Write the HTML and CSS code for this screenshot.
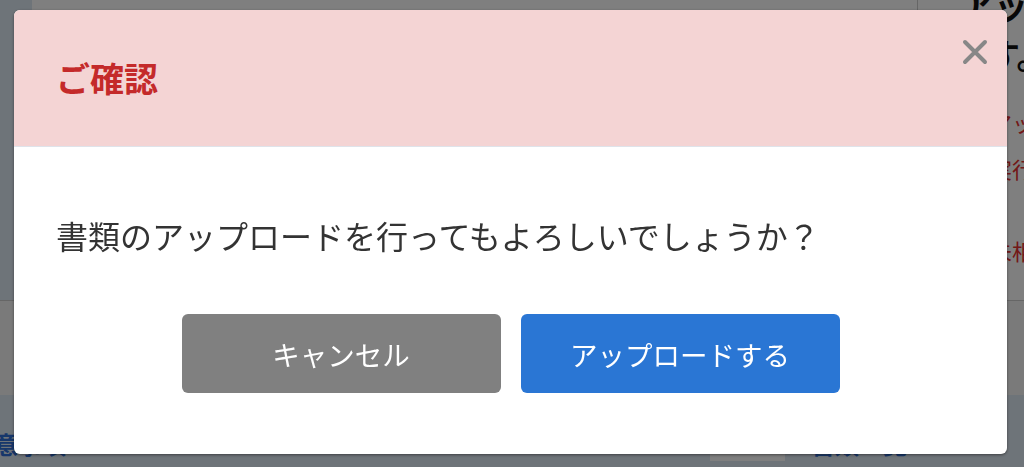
FILE: index.html
```html
<!DOCTYPE html>
<html lang="ja">
  <head>
    <meta charset="UTF-8" />
    <meta name="viewport" content="width=device-width, initial-scale=1.0" />
    <title>ご確認</title>
    <link rel="stylesheet" href="styles.css">
  </head>
  <body>
    <!-- Page behind the dialog -->
    <div class="page">
      <div class="page-top">
        <div class="page-side"></div>
        <div class="page-card">
          <div class="card-main"></div>
          <aside class="card-aside">
            <h2 class="aside-title">アッ<br /><span class="aside-title-indent">す。</span></h2>
            <p class="aside-note">アップロード<br />実行してください</p>
            <p class="aside-note aside-note-last">未相談</p>
          </aside>
        </div>
      </div>
      <div class="page-band"></div>
      <div class="page-bottom">
        <a class="page-link page-link-left">注意事項</a>
        <div class="page-block"></div>
        <a class="page-link">書類一覧</a>
      </div>
    </div>

    <!-- Confirm dialog -->
    <div class="overlay">
      <div class="modal" role="dialog" aria-labelledby="modal-title">
        <header class="modal-header">
          <h1 id="modal-title" class="modal-title">ご確認</h1>
          <button class="modal-close" aria-label="閉じる">
            <svg width="26" height="26" viewBox="0 0 26 26">
              <path d="M3 3 L23 23 M23 3 L3 23" stroke="#878787" stroke-width="4" stroke-linecap="round" fill="none" />
            </svg>
          </button>
        </header>
        <div class="modal-body">
          <p class="modal-text">書類のアップロードを行ってもよろしいでしょうか？</p>
          <div class="modal-actions">
            <button class="btn btn-cancel">キャンセル</button>
            <button class="btn btn-primary">アップロードする</button>
          </div>
        </div>
      </div>
    </div>
  </body>
</html>
```

FILE: styles.css
```css
:root {
  --page-bg: #dde8f2;
  --header-pink: #f4d4d4;
  --title-red: #c42a2a;
  --text-color: #333;
  --cancel-gray: #808080;
  --primary-blue: #2a76d4;
}

* {
  margin: 0;
  padding: 0;
  box-sizing: border-box;
}

body {
  font-family: "Noto Sans CJK JP", "Noto Sans", sans-serif;
  color: var(--text-color);
  width: 1024px;
  height: 467px;
  overflow: hidden;
}

/* background page */
.page {
  height: 467px;
  background: var(--page-bg);
  overflow: hidden;
}

.page-top {
  display: flex;
  height: 300px;
}

.page-side {
  width: 32px;
}

.page-card {
  flex: 1;
  display: flex;
  background: white;
}

.card-main {
  flex: 1;
}

.card-aside {
  width: 107px;
  border-left: 1px solid #ccc;
  padding-left: 42px;
  white-space: nowrap;
}

.aside-title {
  font-size: 34px;
  line-height: 50px;
  margin-top: -20px;
  color: #111;
}

.aside-title-indent {
  padding-left: 26px;
}

.aside-note {
  font-size: 22px;
  line-height: 46px;
  margin-top: 19px;
  padding-left: 30px;
  color: #e53030;
}

.aside-note-last {
  margin-top: 36px;
}

.page-band {
  height: 95px;
  background: #f4f4f4;
  border-top: 1px solid #ccc;
}

.page-bottom {
  display: flex;
  align-items: flex-end;
  height: 72px;
  padding-bottom: 6px;
}

.page-link {
  font-size: 24px;
  font-weight: bold;
  color: #2f6fd6;
}

.page-link-left {
  margin-left: -30px;
}

.page-block {
  width: 75px;
  height: 20px;
  margin: 0 26px 0 644px;
  background: white;
  align-self: flex-end;
}

/* dialog */
.overlay {
  position: fixed;
  inset: 0;
  background: rgba(0, 0, 0, 0.5);
  padding: 10px 0 0 14px;
}

.modal {
  width: 993px;
  background: white;
  border-radius: 6px;
  overflow: hidden;
  box-shadow: 0 1px 3px rgba(0, 0, 0, 0.45);
}

.modal-header {
  display: flex;
  justify-content: space-between;
  align-items: center;
  height: 137px;
  padding: 0 19px 0 42px;
  background: var(--header-pink);
  border-bottom: 1px solid #dfe3ea;
}

.modal-title {
  font-size: 34px;
  font-weight: bold;
  color: var(--title-red);
  line-height: 1;
}

.modal-close {
  align-self: flex-start;
  margin-top: 29px;
  background: none;
  border: none;
  width: 26px;
  height: 26px;
  cursor: pointer;
}

.modal-close svg {
  display: block;
}

.modal-body {
  padding: 64px 42px 61px;
}

.modal-text {
  font-size: 32px;
  line-height: 48px;
}

.modal-actions {
  display: flex;
  justify-content: center;
  gap: 20px;
  margin-top: 55px;
}

.btn {
  width: 319px;
  height: 79px;
  border: none;
  border-radius: 6px;
  color: white;
  font-family: inherit;
  font-size: 27.5px;
  cursor: pointer;
}

.btn-cancel {
  background: var(--cancel-gray);
}

.btn-primary {
  background: var(--primary-blue);
}
```
